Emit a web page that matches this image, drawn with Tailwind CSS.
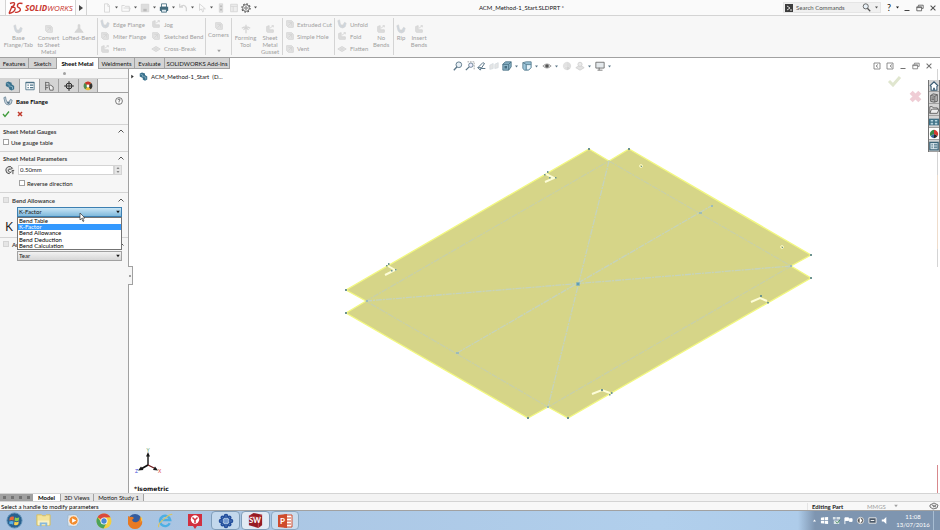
<!DOCTYPE html>
<html lang="en">
<head>
    <meta charset="UTF-8">
    <meta name="viewport" content="width=device-width, initial-scale=1.0">
    <title>SOLIDWORKS - ACM_Method-1_Start.SLDPRT</title>
    <script src="https://cdn.jsdelivr.net/npm/@tailwindcss/browser@4"></script>
</head>
<body class="h-screen flex flex-col overflow-hidden bg-white font-[Lato,sans-serif] text-[6px] leading-[7px] text-neutral-900">

    <!-- Shared icons -->
    <svg class="hidden">
        <symbol id="caret" viewBox="0 0 4 4"><path d="M.8 1.2h2.4L2 2.8z" fill="currentColor"/></symbol>
        <symbol id="chevron" viewBox="0 0 8 8"><path d="M1.5 5.5L4 3l2.500 2.500" fill="none" stroke="#555"/></symbol>
        <symbol id="flange" viewBox="0 0 12 12"><path d="M1 2l2-1 1 5q2 3 4 0l1-2 2 1-1 4q-3 3-6 1Q2 9 1 2z" fill="#cdd6df" stroke="currentColor" stroke-width=".8"/><path d="M4 6q2 3 4 0v3q-3 2-4-3" fill="currentColor"/></symbol>
        <symbol id="sheet" viewBox="0 0 12 12"><path d="M2 2h6l2 2v6H4L2 8z" fill="#e2e2e2" stroke="currentColor"/><path d="M4 4h4v4M4 8l4-4" fill="none" stroke="currentColor"/></symbol>
        <symbol id="bend" viewBox="0 0 12 12"><path d="M2 9V3l3-1v5h5v3H3z" fill="#dcdcdc" stroke="currentColor"/><path d="M6 5l4-3M8 2h2v2" fill="none" stroke="currentColor"/></symbol>
        <symbol id="loft" viewBox="0 0 12 12"><path d="M5 1h2v4l4 5H1l4-5z" fill="#d4d4d4" stroke="currentColor"/></symbol>
        <symbol id="cross" viewBox="0 0 12 12"><path d="M1 6l5-3 5 3-5 3z" fill="#e4e4e4" stroke="currentColor"/><path d="M3.500 4.500l5 3M8.500 4.500l-5 3" stroke="currentColor" stroke-width=".7"/></symbol>
        <symbol id="star" viewBox="0 0 12 12"><path d="M6 1v10M1 5q5-3 10 0M3 7l3-3 3 3" fill="none" stroke="currentColor" stroke-width="1.500"/></symbol>
        <symbol id="lens" viewBox="0 0 12 12"><circle cx="7" cy="4.500" r="3.400" fill="#e8f0f6" stroke="currentColor" stroke-width="1.100"/><path d="M4.800 7L1 11" stroke="currentColor" stroke-width="1.600"/></symbol>
        <symbol id="restore" viewBox="0 0 10 10"><path d="M3 3V1.500h6v4H7.500M1 3.500h6v5H1zM1 4.500h6" fill="none" stroke="currentColor"/></symbol>
        <symbol id="close" viewBox="0 0 10 10"><path d="M2 2l6 6M8 2L2 8" stroke="currentColor" stroke-width="1.300"/></symbol>
        <symbol id="part" viewBox="0 0 12 12"><path d="M1 2l3-1.500 4 1.500v2l3 2v4l-3 1.500-3-1.500V8L1 6z" fill="#38708c"/><path d="M2 3l3 1v3M6 6l3 1v3" fill="none" stroke="#b7d6e4" stroke-width=".7"/></symbol>
        <symbol id="ball" viewBox="0 0 12 12"><circle cx="6" cy="6" r="5" fill="#fff"/><path d="M6 6V1a5 5 0 0 0-4.300 7.500z" fill="#398748"/><path d="M6 6V1a5 5 0 0 1 4.300 7.500z" fill="#d63a32"/><path d="M6 6l-4.300 2.500A5 5 0 0 0 6 11z" fill="#37649c"/><path d="M6 6l4.300 2.500A5 5 0 0 1 6 11z" fill="#282828"/></symbol>
    </svg>

    <!-- Title bar -->
    <header class="flex h-4 shrink-0 items-stretch border-b border-neutral-300 bg-[#fafafa]">
        <div class="ml-[5px] flex w-[71px] items-center gap-[1px] border-x border-neutral-300 bg-white px-[2px] text-[#c8352e]">
            <svg class="h-[14px] w-4" viewBox="0 0 16 14"><path d="M2 2.500q5-2 4.500.5T3 6M1 12.500L3.500 6.500Q8 5.500 7 8.500T1 12.500M14.500 2.500Q10 1.500 9.500 4t2 3q2 2-.5 3.500t-4 .5" fill="none" stroke="currentColor" stroke-width="1.400"/></svg>
            <span class="font-['Open_Sans',sans-serif] text-[8px] leading-[10px] italic"><b>SOLID</b>WORKS</span>
        </div>
        <button aria-label="Expand menu" class="flex w-[11px] items-center justify-center border-r border-neutral-300">
            <svg class="h-[6px] w-1" viewBox="0 0 4 6"><path d="M0 0l4 3-4 3z" fill="#444"/></svg>
        </button>
        <div class="ml-[15px] flex items-center text-neutral-300">
            <button aria-label="New" class="flex w-[19px] items-center"><svg class="size-[10px]" viewBox="0 0 12 12"><path d="M3 1h4l2 2v8H3zM7 1v3h2" fill="none" stroke="currentColor"/></svg><svg class="ml-[2px] size-[5px] text-neutral-600"><use href="#caret"/></svg></button>
            <button aria-label="Open" class="flex w-[19px] items-center"><svg class="size-[10px]" viewBox="0 0 12 12"><path d="M1 10V3h3l1 1h5v6zM3 6h8l-1 4" fill="none" stroke="currentColor"/></svg><svg class="ml-[2px] size-[5px] text-neutral-600"><use href="#caret"/></svg></button>
            <button aria-label="Save" class="flex w-[19px] items-center"><svg class="size-[10px]" viewBox="0 0 12 12"><path d="M1.500 1.500h9v9h-9z" fill="#ddd" stroke="currentColor"/><path d="M4 7h4v3H4z" fill="#bbb"/></svg><svg class="ml-[2px] size-[5px] text-neutral-600"><use href="#caret"/></svg></button>
            <button aria-label="Print" class="flex w-[19px] items-center"><svg class="size-[10px]" viewBox="0 0 12 12"><path d="M3 1h6v4H3z" fill="#fff" stroke="#426a7c"/><path d="M1 4.500h10v5H1z" fill="#426a7c"/><path d="M3 7.500h6v3.500H3z" fill="#dce8ee" stroke="#426a7c"/></svg><svg class="ml-[2px] size-[5px] text-neutral-600"><use href="#caret"/></svg></button>
            <button aria-label="Undo" class="flex w-[19px] items-center"><svg class="size-[10px]" viewBox="0 0 12 12"><path d="M2 1v4h4M2 5q6-5 8 1v4" fill="none" stroke="currentColor" stroke-width="1.500"/></svg><svg class="ml-[2px] size-[5px] text-neutral-600"><use href="#caret"/></svg></button>
            <button aria-label="Select" class="flex w-[19px] items-center"><svg class="size-[10px]" viewBox="0 0 12 12"><path d="M3 1v8l2-2 2 4 1-1-1-3h3z" fill="none" stroke="currentColor"/></svg><svg class="ml-[2px] size-[5px] text-neutral-600"><use href="#caret"/></svg></button>
            <button aria-label="Rebuild" class="flex w-[13px] items-center"><svg class="size-[10px]" viewBox="0 0 12 12"><path d="M4 1h4v10H4z" fill="#e2e2e2" stroke="currentColor"/><circle cx="6" cy="4" r="1.300" fill="#bbb"/><circle cx="6" cy="8" r="1.300" fill="#bbb"/></svg></button>
            <button aria-label="File properties" class="flex w-3 items-center"><svg class="size-[10px]" viewBox="0 0 12 12"><path d="M2 1.500h8v9H2zM2 4h8M5 4v6" fill="#eee" stroke="currentColor"/></svg></button>
            <button aria-label="Options" class="flex w-[19px] items-center"><svg class="size-[10px]" viewBox="0 0 12 12"><circle cx="6" cy="6" r="4" fill="none" stroke="#555"/><circle cx="6" cy="6" r="5" fill="none" stroke="#555" stroke-width="1.300" stroke-dasharray="2 1.900"/><circle cx="6" cy="6" r="1.500" fill="none" stroke="#555"/></svg><svg class="ml-[2px] size-[5px] text-neutral-600"><use href="#caret"/></svg></button>
        </div>
        <h1 class="flex flex-1 items-center justify-center">ACM_Method-1_Start.SLDPRT *</h1>
        <div class="flex w-[157px] shrink-0 items-center">
            <label class="flex h-[11px] w-[98px] items-center gap-[3px] border border-neutral-200 bg-[#f0f0f0] px-[1px]">
                <svg class="size-2 shrink-0" viewBox="0 0 8 8"><path d="M0 0h8v8H0z" fill="#3d3d3d"/><path d="M2 2l3 2-3 2M5 6h2" fill="none" stroke="#ddd"/></svg>
                <input aria-label="Search Commands" class="w-0 flex-1 placeholder:text-neutral-600 outline-none" placeholder="Search Commands">
                <svg class="size-[9px] -scale-x-100 text-neutral-600"><use href="#lens"/></svg>
                <svg class="size-[5px] text-neutral-600"><use href="#caret"/></svg>
            </label>
            <button aria-label="Help" class="w-[14px] pl-[2px] text-[9px] leading-[10px]">?</button>
            <svg class="size-[5px]"><use href="#caret"/></svg>
            <button aria-label="Minimize" class="flex w-[13px] justify-center"><svg class="size-2" viewBox="0 0 8 8"><path d="M1.500 6.500h5" stroke="#444"/></svg></button>
            <button aria-label="Restore" class="flex w-[13px] justify-center text-neutral-600"><svg class="size-2"><use href="#restore"/></svg></button>
            <button aria-label="Close" class="flex w-[13px] justify-center text-neutral-600"><svg class="size-2"><use href="#close"/></svg></button>
        </div>
    </header>

    <!-- Ribbon -->
    <section aria-label="Sheet Metal commands" class="flex h-[42px] shrink-0 border-b border-neutral-400 bg-[#f7f7f7] py-[2px] text-center text-neutral-400">
        <div class="flex w-[98px] items-start border-r border-neutral-300 pt-[6px]">
            <button class="flex w-[37px] flex-col items-center"><svg class="size-[10px] text-neutral-300"><use href="#flange"/></svg>Base<br>Flange/Tab</button>
            <button class="flex w-6 flex-col items-center whitespace-nowrap"><svg class="size-[10px] text-neutral-300"><use href="#sheet"/></svg>Convert<br>to Sheet<br>Metal</button>
            <button class="flex w-[37px] flex-col items-center whitespace-nowrap"><svg class="size-[10px] text-neutral-300"><use href="#loft"/></svg>Lofted-Bend</button>
        </div>
        <div class="flex w-[108px] border-r border-neutral-300 pl-[2px]">
            <div class="flex w-[51px] flex-col whitespace-nowrap">
                <button class="flex h-[13px] items-center gap-[3px]"><svg class="size-[10px] text-neutral-300"><use href="#flange"/></svg>Edge Flange</button>
                <button class="flex h-[13px] items-center gap-[3px]"><svg class="size-[10px] text-neutral-300"><use href="#sheet"/></svg>Miter Flange</button>
                <button class="flex h-[13px] items-center gap-[3px]"><svg class="size-[10px] text-neutral-300"><use href="#bend"/></svg>Hem</button>
            </div>
            <div class="flex flex-col whitespace-nowrap">
                <button class="flex h-[13px] items-center gap-[3px]"><svg class="size-[10px] text-neutral-300"><use href="#bend"/></svg>Jog</button>
                <button class="flex h-[13px] items-center gap-[3px]"><svg class="size-[10px] text-neutral-300"><use href="#sheet"/></svg>Sketched Bend</button>
                <button class="flex h-[13px] items-center gap-[3px]"><svg class="size-[10px] text-neutral-300"><use href="#cross"/></svg>Cross-Break</button>
            </div>
        </div>
        <button class="flex w-[26px] flex-col items-center border-r border-neutral-300 pt-[3px]"><svg class="size-[10px] text-neutral-300"><use href="#sheet"/></svg>Corners<svg class="mt-[10px] size-[6px]"><use href="#caret"/></svg></button>
        <div class="flex w-[51px] items-start border-r border-neutral-300 pt-[6px]">
            <button class="flex w-[27px] flex-col items-center"><svg class="size-[10px] text-neutral-300"><use href="#star"/></svg>Forming<br>Tool</button>
            <button class="flex w-[22px] flex-col items-center"><svg class="size-[10px] text-neutral-300"><use href="#bend"/></svg>Sheet<br>Metal<br>Gusset</button>
        </div>
        <div class="flex w-[52px] flex-col whitespace-nowrap border-r border-neutral-300 pl-[2px]">
            <button class="flex h-[13px] items-center gap-[2px]"><svg class="size-[10px] text-neutral-300"><use href="#sheet"/></svg>Extruded Cut</button>
            <button class="flex h-[13px] items-center gap-[2px]"><svg class="size-[10px] text-neutral-300"><use href="#sheet"/></svg>Simple Hole</button>
            <button class="flex h-[13px] items-center gap-[2px]"><svg class="size-[10px] text-neutral-300"><use href="#sheet"/></svg>Vent</button>
        </div>
        <div class="flex w-[59px] border-r border-neutral-300 pl-[2px]">
            <div class="flex w-9 flex-col">
                <button class="flex h-[13px] items-center gap-[3px]"><svg class="size-[10px] text-neutral-300"><use href="#flange"/></svg>Unfold</button>
                <button class="flex h-[13px] items-center gap-[3px]"><svg class="size-[10px] text-neutral-300"><use href="#bend"/></svg>Fold</button>
                <button class="flex h-[13px] items-center gap-[3px]"><svg class="size-[10px] text-neutral-300"><use href="#cross"/></svg>Flatten</button>
            </div>
            <button class="flex flex-col items-center self-start pt-[6px]"><svg class="size-[10px] text-neutral-300"><use href="#bend"/></svg>No<br>Bends</button>
        </div>
        <div class="flex items-start pt-[6px]">
            <button class="flex w-[14px] flex-col items-center"><svg class="size-[10px] text-neutral-300"><use href="#flange"/></svg>Rip</button>
            <button class="flex w-[22px] flex-col items-center"><svg class="size-[10px] text-neutral-300"><use href="#bend"/></svg>Insert<br>Bends</button>
        </div>
    </section>

    <!-- Command tabs and view toolbar -->
    <div class="relative z-10 flex h-[11px] shrink-0 items-start">
        <nav class="flex h-[11px] items-stretch whitespace-nowrap text-center">
            <button class="w-[29px] border-r border-b border-neutral-400 bg-neutral-300">Features</button>
            <button class="w-[28px] border-r border-b border-neutral-400 bg-neutral-300">Sketch</button>
            <button class="w-[41px] bg-white font-bold text-black">Sheet Metal</button>
            <button class="w-[37px] border-x border-b border-neutral-400 bg-neutral-300">Weldments</button>
            <button class="w-[30px] border-r border-b border-neutral-400 bg-neutral-300">Evaluate</button>
            <button class="w-[65px] border-r border-b border-neutral-400 bg-neutral-300">SOLIDWORKS Add-Ins</button>
        </nav>
        <div class="flex h-4 flex-1 items-center justify-center gap-[2px] pr-9 text-[#5b7688]">
            <button aria-label="Zoom to fit"><svg class="size-[10px]"><use href="#lens"/></svg></button>
            <button aria-label="Zoom to area"><svg class="size-[10px]" viewBox="0 0 12 12"><path d="M3 1h8v9" fill="none" stroke="#999" stroke-dasharray="2 1"/><circle cx="7" cy="5" r="2.600" fill="#eef" stroke="currentColor"/><path d="M5 7l-4 4" stroke="currentColor" stroke-width="1.500"/></svg></button>
            <button aria-label="Previous view"><svg class="size-[10px]" viewBox="0 0 12 12"><path d="M1 8l6-6 2 1-4 6h5M1 8h4l-1 3z" fill="none" stroke="currentColor" stroke-width="1.200"/></svg></button>
            <button aria-label="Section view"><svg class="size-[10px] opacity-25" viewBox="0 0 12 12"><path d="M1 5l4-2v6l-4 1zM7 4l4-2v6l-4 1z" fill="#999" stroke="currentColor"/></svg></button>
            <div class="ml-[1px] flex items-center gap-[1px]">
                <button aria-label="View orientation" class="flex w-[19px] items-center"><svg class="size-[10px]" viewBox="0 0 12 12"><path d="M1 4l3-3h7v6l-3 4H1z" fill="#8cb4c8" stroke="#456c80"/><path d="M1 4h7v7M8 4l3-3" fill="none" stroke="#456c80"/><path d="M3 6h3v3H3z" fill="#456c80"/></svg><svg class="ml-[2px] size-[5px]"><use href="#caret"/></svg></button>
                <button aria-label="Display style" class="flex w-[19px] items-center"><svg class="size-[10px]" viewBox="0 0 12 12"><path d="M1 2l4-1h6v7l-3 3H3l-2-2z" fill="#9ec7dc" stroke="#567a8c"/><path d="M1 2l4 2v7M5 4h6" stroke="#567a8c" fill="none"/><path d="M6 5h4v3l-2 2H6z" fill="#e9f3f8"/></svg><svg class="ml-[2px] size-[5px]"><use href="#caret"/></svg></button>
                <button aria-label="Hide or show items" class="flex w-[19px] items-center"><svg class="size-[10px]" viewBox="0 0 12 12"><path d="M1 6q5-5 10 0-5 5-10 0z" fill="#ddd" stroke="#999"/><circle cx="6" cy="6" r="2.200" fill="#555"/></svg><svg class="ml-[2px] size-[5px]"><use href="#caret"/></svg></button>
                <button aria-label="Edit appearance" class="flex w-3 items-center"><svg class="size-[10px] opacity-20 grayscale"><use href="#ball"/></svg></button>
                <button aria-label="Apply scene" class="flex w-[19px] items-center"><svg class="size-[10px] opacity-40" viewBox="0 0 12 12"><path d="M1 8l5-3 5 3-5 3z" fill="#bbb" stroke="#888"/><circle cx="6" cy="4" r="2.500" fill="#ccc" stroke="#888"/></svg><svg class="ml-[2px] size-[5px]"><use href="#caret"/></svg></button>
                <button aria-label="View settings" class="flex w-[19px] items-center"><svg class="size-[10px]" viewBox="0 0 12 12"><path d="M1 1.500h10v7H1z" fill="#e4e9ec" stroke="#666"/><path d="M5 8v3M3 11h6" stroke="#666"/></svg><svg class="ml-[2px] size-[5px]"><use href="#caret"/></svg></button>
            </div>
        </div>
        <div class="flex h-4 w-[67px] shrink-0 items-center gap-[5px] text-neutral-500">
            <button aria-label="Collapse left"><svg class="size-2" viewBox="0 0 8 8"><path d="M1 1h6v6H1zM5 2.500L3 4l2 1.500" fill="none" stroke="currentColor" stroke-width=".8"/></svg></button>
            <button aria-label="Collapse right"><svg class="size-2" viewBox="0 0 8 8"><path d="M1 1h6v6H1zM6 2.500L4 4l2 1.500" fill="none" stroke="currentColor" stroke-width=".8"/></svg></button>
            <button aria-label="Minimize document"><svg class="size-2" viewBox="0 0 8 8"><path d="M1.500 6.500h5" stroke="currentColor"/></svg></button>
            <button aria-label="Restore document"><svg class="size-2"><use href="#restore"/></svg></button>
            <button aria-label="Close document"><svg class="size-2"><use href="#close"/></svg></button>
        </div>
    </div>

    <div class="flex min-h-0 flex-1">
        <!-- Property manager -->
        <aside class="w-[129px] shrink-0 border-r border-neutral-400 bg-[#f6f6f6]">
            <div class="flex h-[10px] items-center justify-center border-b border-neutral-300"><span class="size-[3px] rounded-full bg-neutral-400"></span></div>
            <div class="flex h-[14px] border-b border-neutral-400">
                <button aria-label="FeatureManager" class="flex w-5 items-center justify-center border-r border-neutral-400 bg-neutral-300"><svg class="size-[10px]"><use href="#part"/></svg></button>
                <button aria-label="PropertyManager" class="-mb-px flex w-[19px] items-center justify-center bg-[#f6f6f6]"><svg class="size-[10px]" viewBox="0 0 12 12"><path d="M1 1.500h10v9H1z" fill="#fff" stroke="#4b7186"/><path d="M1 2h10M3 5h1.500M6 5h4M3 8h1.500M6 8h4" stroke="#4b7186" stroke-width="1.400"/></svg></button>
                <button aria-label="ConfigurationManager" class="flex w-5 items-center justify-center border-x border-neutral-400 bg-neutral-300"><svg class="size-[10px]" viewBox="0 0 12 12"><path d="M2 1v10M2 2h4v3H2M2 8h3M6 6l2-1 3 2v4H7z" fill="#eee" stroke="#555"/></svg></button>
                <button aria-label="DimXpertManager" class="flex w-5 items-center justify-center border-r border-neutral-400 bg-neutral-300"><svg class="size-[10px]" viewBox="0 0 12 12"><circle cx="6" cy="6" r="3.500" fill="none" stroke="#222" stroke-width="1.200"/><path d="M6 0v12M0 6h12" stroke="#222"/></svg></button>
                <button aria-label="DisplayManager" class="flex w-[19px] items-center justify-center border-r border-neutral-400 bg-neutral-300"><svg class="size-[10px]" viewBox="0 0 12 12"><circle cx="6" cy="6" r="5" fill="#e9bb37"/><path d="M6 6L2 2.500A5 5 0 0 1 10 2.500z" fill="#c7342e"/><path d="M6 6l4-3.500A5 5 0 0 1 9 10z" fill="#333"/><path d="M6 6L2 2.500A5 5 0 0 0 3 10z" fill="#4b8a50"/><circle cx="6" cy="6" r="1.700" fill="#fff"/></svg></button>
            </div>
            <div class="flex h-4 items-center gap-[3px] px-[3px] text-[#4f6f85]">
                <svg class="size-[10px]"><use href="#flange"/></svg>
                <h2 class="flex-1 font-bold text-black">Base Flange</h2>
                <button aria-label="Help on Base Flange" class="mr-[2px]"><svg class="size-2" viewBox="0 0 8 8"><circle cx="4" cy="4" r="3.400" fill="#fff" stroke="#555" stroke-width=".8"/><path d="M3 3.200q0-1.200 1-1.200t1 1q0 .7-1 1.300v.7M4 5.600v.8" fill="none" stroke="#444" stroke-width=".8"/></svg></button>
            </div>
            <div class="flex h-4 items-start gap-[5px] border-b border-neutral-300 px-[2px] pt-[1px]">
                <button aria-label="OK"><svg class="size-2" viewBox="0 0 8 8"><path d="M1 4l2 2.500L7 1.500" fill="none" stroke="#3f9b3b" stroke-width="1.300"/></svg></button>
                <button aria-label="Cancel"><svg class="ml-[1px] size-2" viewBox="0 0 8 8"><path d="M2 2l4 4M6 2L2 6" stroke="#c0392b" stroke-width="1.500"/></svg></button>
            </div>

            <section class="h-[27px] border-b border-neutral-300 px-[3px] pt-[2px]">
                <h3 class="flex h-2 items-center justify-between font-bold text-neutral-700">Sheet Metal Gauges<svg class="size-2"><use href="#chevron"/></svg></h3>
                <label class="flex h-[14px] items-center gap-[2px]"><input type="checkbox" class="size-[6px] appearance-none border border-neutral-400 bg-white">Use gauge table</label>
            </section>

            <section class="h-[41px] border-b border-neutral-300 px-[3px] pt-[2px]">
                <h3 class="flex h-2 items-center justify-between font-bold text-neutral-700">Sheet Metal Parameters<svg class="size-2"><use href="#chevron"/></svg></h3>
                <div class="mt-[2px] flex h-[11px] items-center pr-[3px]">
                    <svg class="ml-[2px] mr-[3px] size-[10px]" viewBox="0 0 12 12"><path d="M1 6q1-5 6-4l2 2-2 1Q4 4 4 7l2 2-1 1.500Q1 10 1 6z" fill="#ddd" stroke="#333"/><path d="M8 6.500h3M9.500 7v4M6 9l2-1" stroke="#333" fill="none"/></svg>
                    <input aria-label="Thickness" value="0.50mm" class="h-[10px] w-0 flex-1 border border-neutral-300 bg-white px-[1px]">
                    <button aria-label="Change thickness" class="flex h-[10px] w-2 items-center justify-center border border-neutral-300 bg-neutral-200"><svg class="h-2 w-[6px]" viewBox="0 0 6 8"><path d="M1.500 3L3 1l1.500 2zM1.500 5L3 7l1.500-2z" fill="#888"/></svg></button>
                </div>
                <label class="ml-4 mt-[2px] flex h-3 items-center gap-[2px]"><input type="checkbox" class="size-[6px] appearance-none border border-neutral-400 bg-white">Reverse direction</label>
            </section>

            <section class="h-[45px] border-b border-neutral-300 px-[3px] pt-[3px]">
                <h3 class="flex h-2 items-center font-bold text-neutral-700"><input type="checkbox" checked disabled aria-label="Bend Allowance" class="mr-[3px] size-[6px] appearance-none border border-neutral-300 bg-neutral-200"><span class="flex-1">Bend Allowance</span><svg class="size-2"><use href="#chevron"/></svg></h3>
                <div class="relative ml-[14px] mr-[3px] mt-[3px]">
                    <select aria-label="Bend allowance type" class="block h-[10px] w-full appearance-none border border-[#3c7fb1] bg-linear-to-b from-[#c9e6f6] to-[#7fb9dc] px-[1px] leading-[8px]"><option>K-Factor</option></select>
                    <svg class="absolute right-[1px] top-[2px] size-[6px]"><use href="#caret"/></svg>
                    <ul class="absolute left-0 top-[10px] z-10 w-full border border-neutral-500 bg-white text-black">
                        <li class="h-[6px] px-[1px] leading-[6px]">Bend Table</li>
                        <li class="h-[6px] bg-[#3399ff] px-[1px] leading-[6px] text-white">K-Factor</li>
                        <li class="h-[6px] px-[1px] leading-[6px]">Bend Allowance</li>
                        <li class="h-[7px] px-[1px] leading-[7px]">Bend Deduction</li>
                        <li class="h-[6px] px-[1px] leading-[6px]">Bend Calculation</li>
                    </ul>
                    <svg class="absolute left-[62px] top-[5px] z-20 h-[10px] w-[7px]" viewBox="0 0 7 10"><path d="M1 1v7l1.500-1.500L4 9.500l1-.5-1.500-3H6z" fill="#fff" stroke="#333" stroke-width=".7"/></svg>
                </div>
                <span class="block pl-[2px] pt-[2px] font-['Open_Sans',sans-serif] text-[13px] leading-[14px]">K</span>
            </section>

            <section class="px-[3px] pt-[2px]">
                <h3 class="flex h-2 items-center font-bold text-neutral-700"><input type="checkbox" checked disabled aria-label="Auto Relief" class="mr-[3px] size-[6px] appearance-none border border-neutral-300 bg-neutral-200"><span class="flex-1">Auto Relief</span><svg class="size-2"><use href="#chevron"/></svg></h3>
                <div class="relative ml-[14px] mr-[3px] mt-[3px]">
                    <select aria-label="Relief type" class="block h-[10px] w-full appearance-none border border-neutral-400 bg-linear-to-b from-[#f2f2f2] to-[#d6d6d6] px-[1px] leading-[8px]"><option>Tear</option></select>
                    <svg class="absolute right-[1px] top-[2px] size-[6px]"><use href="#caret"/></svg>
                </div>
            </section>
        </aside>

        <!-- Graphics area -->
        <main class="relative flex-1 bg-white">
            <svg class="absolute inset-0 h-full w-full" viewBox="129 69 811 424">
                <path d="M589 149l20 12 20-12 182 106-20 11 20 12-243 140-20-11-20 11-182-105 20-12-20-11z" fill="#d6d588" stroke="#f2f880" stroke-width="1.300"/>
                <g fill="none" stroke="#c8d0a8" stroke-width="1.300" stroke-dasharray="6 1 2 1">
                    <path d="M609 161l182 105-243 141-182-106z"/>
                    <path d="M609 161l-61 246M366 301l425-35" stroke="#c5d3bd"/>
                    <path d="M457 353l254-147" stroke="#c5d3bd"/>
                </g>
                <g fill="none" stroke="#fdfdd8" stroke-width="2">
                    <path d="M546 174l8 4-9 4M388 266l7 4-10 5M751 302l9-4 7 3M592 394l10-4 8 3"/>
                </g>
                <g fill="none" stroke="#f4f4c0"><circle cx="641" cy="166" r="1.500"/><circle cx="782" cy="247" r="1.500"/></g>
                <g fill="#6d9490">
                    <path d="M588 148h2v2h-2zM628 148h2v2h-2zM810 254h2v2h-2zM810 277h2v2h-2zM567 417h2v2h-2zM527 417h2v2h-2zM345 312h2v2h-2zM345 289h2v2h-2z"/>
                    <path d="M547 171h1.500v2H547zM544 174h1.500v1.500H544zM555 177h1.500v1.500H555zM549 177h1.500v1.500H549zM388 263h1.500v2H388zM386 265h1.500v1.500H386zM395 269h1.500v1.500H395zM391 270h1.500v1.500H391zM760 295h2v2h-2zM767 302h2v1.500h-2zM601 389h2v2h-2zM611 392h1.500v2H611zM609 394h1.500v1.500H609zM641 166h1v1h-1zM782 247h1v1h-1z"/>
                </g>
                <g fill="#9dbcb8"><path d="M699 212h3v2h-3zM711 205h2v2h-2zM456 352h3v2h-3zM366 300h2v2h-2zM547 406h2v2h-2zM790 265h2v2h-2z"/></g>
                <path d="M576.500 282.500h3v3h-3z" fill="#5d9fb8" stroke="#8cb5b4" stroke-width=".7"/>
            </svg>

            <div class="relative flex h-[15px] items-center gap-[3px] pl-px">
                <svg class="size-[5px]" viewBox="0 0 4 4"><path d="M1 .5L3 2 1 3.500z" fill="#333"/></svg>
                <svg class="ml-[1px] size-[9px]"><use href="#part"/></svg>
                <span>ACM_Method-1_Start&nbsp; (D...</span>
            </div>

            <!-- Confirmation corner -->
            <svg class="absolute right-[38px] top-[6px] h-3 w-[15px]" viewBox="0 0 15 12"><path d="M2 6l4 4 7-8" fill="none" stroke="#e0e6cf" stroke-width="3"/></svg>
            <svg class="absolute right-[18px] top-[21px] size-[13px]" viewBox="0 0 12 12"><path d="M2 2l8 8M10 2l-8 8" stroke="#efcdd5" stroke-width="4"/></svg>

            <!-- Task pane -->
            <div class="absolute inset-y-0 right-[2px] flex w-px flex-col">
                <div class="h-[106px] bg-neutral-300"></div>
                <div class="h-[74px] bg-[#eedccb]"></div>
                <div class="h-[18px] bg-neutral-300"></div>
                <div class="mt-auto h-7 bg-[#d8888c]"></div>
            </div>
            <nav class="absolute right-0 top-[11px] flex w-3 flex-col border-x border-neutral-500 bg-neutral-300">
                <button aria-label="Resources" class="flex h-[12px] items-center justify-center border-b border-neutral-400"><svg class="size-[10px]" viewBox="0 0 12 12"><path d="M1 6l5-5 5 5M2.500 6v5h7V6" fill="#fff" stroke="#395b73" stroke-width="1.300"/><path d="M5 8h2v3H5z" fill="#395b73"/></svg></button>
                <button aria-label="Design library" class="flex h-[12px] items-center justify-center border-b border-neutral-400"><svg class="size-[10px]" viewBox="0 0 12 12"><path d="M2 3l3-2 5 1v8l-4 1-4-1z" fill="#bbb" stroke="#555"/><path d="M2 3l5 1 3-2M7 4v7M3 6h3M3 8h3" stroke="#555" fill="none"/></svg></button>
                <button aria-label="File explorer" class="flex h-[12px] items-center justify-center border-b border-neutral-400"><svg class="size-[10px]" viewBox="0 0 12 12"><path d="M1 10V2h3l1 1.500h5V5M1 10l2-5h9l-2 5z" fill="#eee" stroke="#555"/></svg></button>
                <button aria-label="View palette" class="flex h-[12px] items-center justify-center border-b border-neutral-400"><svg class="size-[10px]" viewBox="0 0 12 12"><path d="M0 2h12v8H0z" fill="#3f7186"/><path d="M2 3.500h3v2H2zM7 3.500h3v2H7zM2 7h3v2H2zM7 7h3v2H7z" fill="#b8d5df"/></svg></button>
                <button aria-label="Appearances" class="flex h-[12px] items-center justify-center border-b border-neutral-400 bg-white"><svg class="size-[10px]"><use href="#ball"/></svg></button>
                <button aria-label="Custom properties" class="flex h-[12px] items-center justify-center border-b border-neutral-400"><svg class="size-[10px]" viewBox="0 0 12 12"><path d="M1 1.500h10v9H1z" fill="#d5e3ea" stroke="#3b6478" stroke-width="1.500"/><path d="M3 4h1.500M6 4h4M3 6h1.500M6 6h4M3 8h1.500M6 8h4" stroke="#3b6478"/></svg></button>
            </nav>

            <button aria-label="Collapse panel" class="absolute -left-px top-[197px] flex h-[19px] w-[5px] items-center justify-center border border-l-0 border-neutral-400 bg-neutral-100"><span class="size-[2px] bg-neutral-400"></span></button>

            <!-- Orientation triad -->
            <svg class="absolute bottom-[16px] left-[5px] h-[30px] w-[28px]" viewBox="0 0 28 30">
                <path d="M14 18V8" stroke="#222" stroke-width="1.500"/><path d="M14 18l-7 4" stroke="#111" stroke-width="1.700"/><path d="M14 18l8 4" stroke="#6d1a1a" stroke-width="1.300"/>
                <path d="M12 9.500L14 5l2 4.500zM4 23.500l3-4 2.500 3.500zM24 23.500l-5-.5 2-3.500z" fill="#1a1a1a"/>
                <text x="12.500" y="5" font-size="5" fill="#5a9e5f">Y</text><text x="1" y="26" font-size="5" fill="#3d46d8">Z</text><text x="24" y="26" font-size="5" fill="#dd4343">X</text>
            </svg>
            <span class="absolute bottom-0 left-[5px] font-['DejaVu_Sans',sans-serif] text-[6px] font-bold leading-2">*Isometric</span>
        </main>
    </div>

    <!-- Document tabs -->
    <nav class="flex h-[9px] shrink-0 items-stretch border-y border-neutral-300 bg-[#f3f3f3] text-center">
        <div class="flex w-[33px] items-center justify-around border-r border-neutral-400 bg-neutral-400 text-neutral-500"><i class="size-[3px] bg-current"></i><i class="size-[3px] bg-current"></i><i class="size-[3px] bg-current"></i><i class="size-[3px] bg-current"></i></div>
        <button class="w-[27px] bg-white font-bold text-black">Model</button>
        <button class="w-[34px] border-x border-neutral-400 bg-neutral-200">3D Views</button>
        <button class="w-[50px] border-r border-neutral-400 bg-neutral-200">Motion Study 1</button>
    </nav>

    <!-- Status bar -->
    <footer class="flex h-[9px] shrink-0 items-center border-b border-neutral-400 bg-[#f8f8f8] pl-px">
        <span class="flex-1 text-black">Select a handle to modify parameters</span>
        <span class="w-[60px] border-l border-neutral-200 pl-[4px] font-bold">Editing Part</span>
        <span class="w-[26px] text-neutral-400">MMGS</span>
        <svg class="size-[6px] text-neutral-400"><use href="#caret"/></svg>
        <svg class="ml-[30px] mr-[1px] h-2 w-[10px]" viewBox="0 0 10 8"><path d="M1 3l4-2 4 2-1 3-4 1-3-2zM3 3l4 2M7 3L4 5" fill="#eee" stroke="#777"/></svg>
    </footer>

    <!-- Taskbar -->
    <nav aria-label="Taskbar" class="flex h-[19px] shrink-0 items-stretch bg-linear-to-r from-[#a7c1df] via-[#b1cfec] via-70% to-[#abc9e8]">
        <button aria-label="Start" class="flex w-[28px] items-center justify-center"><svg class="size-[17px]" viewBox="0 0 18 18"><circle cx="9" cy="9" r="8" fill="#29618f" stroke="#6393b8"/><path d="M4 6q2-2 4.500-1L8 9q-2-1-4.500 0z" fill="#e8683b"/><path d="M9.500 5.500q2 1.500 4.500 0L13.500 9Q11 10.500 9 9z" fill="#8ccb4e"/><path d="M3.500 10Q6 9 8 10l-.5 3.500Q6 12 3.500 13z" fill="#55aee6"/><path d="M9 10q2 1.500 4.500 0L13 13q-2 2-4.500.5z" fill="#f8d14b"/></svg></button>
        <button aria-label="Explorer" class="flex w-[30px] items-center justify-center"><svg class="size-[17px]" viewBox="0 0 18 18"><path d="M2 14V3h5l1 1h3l1-1h4v11z" fill="#f3e39b" stroke="#d4bd62"/><path d="M3 9h12v5H3z" fill="#f9f1c4"/><path d="M5 15v-4h8v4h-2v-2H7v2z" fill="#86b8dc"/></svg></button>
        <button aria-label="Media player" class="flex w-[30px] items-center justify-center"><svg class="size-[15px]" viewBox="0 0 16 16"><rect x="2" y="2" width="10" height="12" rx="1" fill="#d9e4ed" stroke="#9eb6ca"/><circle cx="8" cy="8" r="5" fill="#f18d31" stroke="#fff"/><path d="M6.500 5.500L11 8l-4.500 2.500z" fill="#fff"/></svg></button>
        <button aria-label="Chrome" class="flex w-[31px] items-center justify-center"><svg class="size-[16px]" viewBox="0 0 16 16"><circle cx="8" cy="8" r="7.500" fill="#f3cf40"/><path d="M8 8L1.500 4.200A7.500 7.500 0 0 1 14.500 4.300L8 4.400z" fill="#d94a3d"/><path d="M1.500 4.200A7.500 7.500 0 0 0 7.500 15.500L10.500 10 5 9z" fill="#4ba35a"/><circle cx="8" cy="8" r="3.500" fill="#fff"/><circle cx="8" cy="8" r="2.700" fill="#4a88d3"/></svg></button>
        <button aria-label="Firefox" class="flex w-[31px] items-center justify-center"><svg class="size-[16px]" viewBox="0 0 16 16"><circle cx="8" cy="8" r="7" fill="#345c9f"/><path d="M1 3l2 1q2-1 4 1L5 7q1 3 5 2 3-1 3-5 3 3 2 7-2 5-7 5T1 11z" fill="#e77a24"/><path d="M13 3q2 4 0 7 3-3 2-5z" fill="#f9cd45"/></svg></button>
        <button aria-label="Internet Explorer" class="flex w-[30px] items-center justify-center"><svg class="size-[17px]" viewBox="0 0 18 18"><path d="M13.500 12A5.500 5.500 0 1 1 14 8.500H5" fill="none" stroke="#4dafe4" stroke-width="2.500"/><path d="M2 16Q0 13 8 7q7-6 8-4" fill="none" stroke="#d8c565" stroke-width="1.200"/></svg></button>
        <button aria-label="Reader" class="flex w-[30px] items-center justify-center"><svg class="size-[16px]" viewBox="0 0 16 16"><path d="M1 1h14v12h-5l-2 3-2-3H1z" fill="#d13040"/><circle cx="8" cy="6.500" r="4.200" fill="#fff"/><path d="M5.500 4.500L8 7l2.500-2.500M8 7v3" fill="none" stroke="#d13040" stroke-width="1.500"/></svg></button>
        <button aria-label="GoToWebinar" class="ml-px flex w-[29px] items-center justify-center rounded-sm border border-[#7f9db9] bg-[#c3d8ec]"><svg class="size-[16px]" viewBox="0 0 16 16"><g fill="#244f9c"><circle cx="8" cy="3" r="2.300"/><circle cx="8" cy="13" r="2.300"/><circle cx="3" cy="8" r="2.300"/><circle cx="13" cy="8" r="2.300"/><circle cx="4.500" cy="4.500" r="2"/><circle cx="11.500" cy="4.500" r="2"/><circle cx="4.500" cy="11.500" r="2"/><circle cx="11.500" cy="11.500" r="2"/></g><circle cx="8" cy="8" r="2.300" fill="#7fa4d7"/><path d="M8 2v12M2 8h12M4 4l8 8M12 4l-8 8" stroke="#6f95cc" stroke-width=".6"/></svg></button>
        <button aria-label="SOLIDWORKS" class="ml-px flex w-[29px] items-center justify-center rounded-sm border border-[#7f9db9] bg-[#e1eaf4]"><svg class="size-[17px]" viewBox="0 0 18 18"><path d="M2 4l5-3 9 2v11l-4 3-10-3z" fill="#961c24"/><path d="M2 4l10 2 4-3M12 6v11" fill="none" stroke="#d76065" stroke-width=".7"/><text x="2" y="12" font-size="8" font-weight="bold" fill="#fff">SW</text></svg></button>
        <button aria-label="PowerPoint" class="ml-px flex w-[28px] items-center justify-center rounded-sm border border-[#8aa8c3] bg-[#c9dcee]"><svg class="size-[16px]" viewBox="0 0 16 16"><path d="M7 2h8v12H7z" fill="#fff" stroke="#cf4b2c"/><path d="M9 5h5M9 8h5M9 11h5" stroke="#cf4b2c"/><path d="M1 2l9-1v14l-9-1z" fill="#cf4b2c"/><text x="3" y="11" font-size="8" font-weight="bold" fill="#fff">P</text></svg></button>
        <div class="ml-auto flex w-[142px] items-center bg-linear-to-r from-transparent to-[#7e95b0] to-12% pl-[14px] text-white">
            <svg class="size-[5px] rotate-180"><use href="#caret"/></svg>
            <div class="ml-[3px] flex flex-1 items-center gap-[3px]">
                <svg class="size-[9px]" viewBox="0 0 10 10"><path d="M1 2l3.500-.5v3H1zM5.200 1.300L9 1v3.500H5.200zM1 5.300h3.500v3L1 8zM5.200 5.300H9V9l-3.800-.5z" fill="#fff"/></svg>
                <svg class="size-[9px]" viewBox="0 0 10 10"><path d="M1 1h3v3H1zM5 1h4v3H5zM2 5h6v4H2z" fill="#dbe4e9"/><path d="M4 6l2 2 3-4" fill="none" stroke="#3d8651"/></svg>
                <svg class="size-[9px]" viewBox="0 0 10 10"><path d="M1 2v7M1 2h4v3H1M6 3h3v3H6z" fill="#fff" stroke="#fff"/></svg>
                <svg class="size-[9px]" viewBox="0 0 10 10"><circle cx="5" cy="5" r="3.500" fill="#555" stroke="#eee"/><path d="M4 1l3 4-3 4" fill="#fff"/></svg>
                <svg class="size-[9px]" viewBox="0 0 10 10"><path d="M1 2h8v6H1z" fill="#4a5868" stroke="#eee"/><path d="M3 5h4" stroke="#fff"/></svg>
                <svg class="size-[9px]" viewBox="0 0 10 10"><path d="M2 4h2l3-3v8L4 6H2z" fill="#fff"/></svg>
            </div>
            <time class="w-[40px] text-center leading-2">11:08<br>13/07/2016</time>
            <span class="h-full w-[7px] border-l border-[#a8bdd2]"></span>
        </div>
    </nav>
</body>
</html>
